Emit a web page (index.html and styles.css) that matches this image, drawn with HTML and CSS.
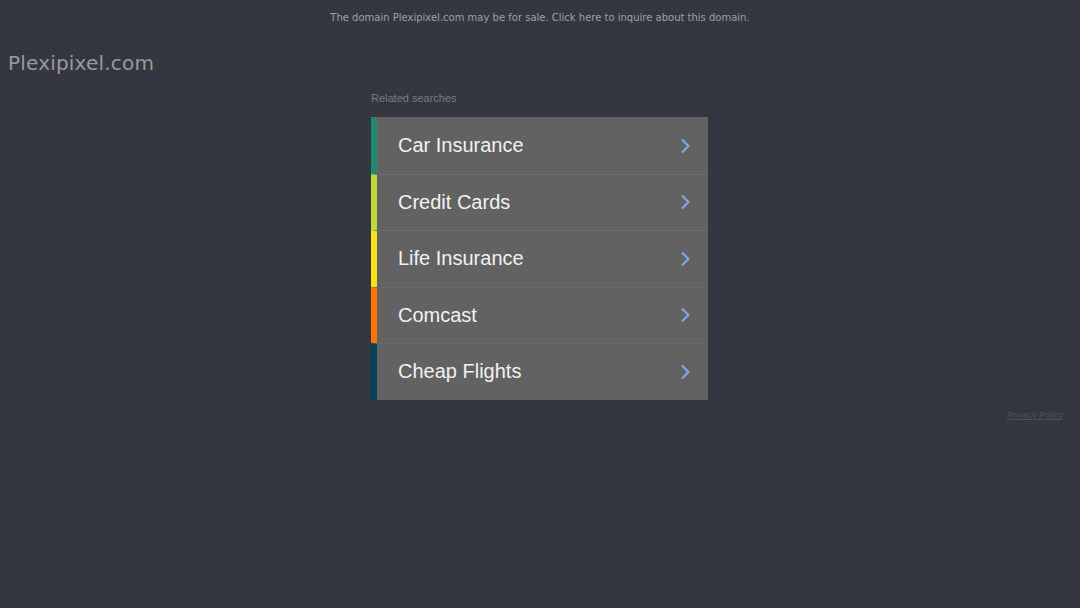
FILE: index.html
```html
<!DOCTYPE html>
<html>
<head>
<meta charset="utf-8">
<link rel="stylesheet" href="styles.css">
</head>
<body>
<div class="topbar">The domain Plexipixel.com may be for sale. Click here to inquire about this domain.</div>
<div class="logo">Plexipixel.com</div>
<div class="main">
  <div class="related">Related searches</div>
  <ul class="list">
    <li class="row c1"><span class="label">Car Insurance</span><svg class="chev" viewBox="0 0 10 16" width="10" height="16"><path d="M2 1.5 L8.5 8 L2 14.5" fill="none" stroke="#7ea6e8" stroke-width="2.2"/></svg></li>
    <li class="row c2"><span class="label">Credit Cards</span><svg class="chev" viewBox="0 0 10 16" width="10" height="16"><path d="M2 1.5 L8.5 8 L2 14.5" fill="none" stroke="#7ea6e8" stroke-width="2.2"/></svg></li>
    <li class="row c3"><span class="label">Life Insurance</span><svg class="chev" viewBox="0 0 10 16" width="10" height="16"><path d="M2 1.5 L8.5 8 L2 14.5" fill="none" stroke="#7ea6e8" stroke-width="2.2"/></svg></li>
    <li class="row c4"><span class="label">Comcast</span><svg class="chev" viewBox="0 0 10 16" width="10" height="16"><path d="M2 1.5 L8.5 8 L2 14.5" fill="none" stroke="#7ea6e8" stroke-width="2.2"/></svg></li>
    <li class="row c5"><span class="label">Cheap Flights</span><svg class="chev" viewBox="0 0 10 16" width="10" height="16"><path d="M2 1.5 L8.5 8 L2 14.5" fill="none" stroke="#7ea6e8" stroke-width="2.2"/></svg></li>
  </ul>
</div>
<div class="footer"><a class="privacy" href="#">Privacy Policy</a></div>
</body>
</html>
```

FILE: styles.css
```css
html, body {
  margin: 0;
  padding: 0;
  background: #353740;
  height: 100%;
}
body {
  font-family: "DejaVu Sans", sans-serif;
}
.topbar {
  text-align: center;
  font-size: 10px;
  color: #9aa0ab;
  padding-top: 12px;
  height: 16px;
}
.logo {
  margin-top: 23px;
  margin-left: 8px;
  font-size: 20px;
  color: #9a9a9a;
  letter-spacing: 0.2px;
  height: 25px;
}
.main {
  width: 338px;
  margin: 0 auto;
  padding-top: 16px;
}
.related {
  font-family: "Liberation Sans", Arial, sans-serif;
  font-size: 11px;
  color: #7a7a7a;
  height: 13px;
  margin-bottom: 12px;
}
.list {
  list-style: none;
  margin: 0 1px 0 0;
  padding: 0;
  background: #626262;
}
.row {
  display: flex;
  align-items: center;
  justify-content: space-between;
  height: 55.5px;
  border-left: 6px solid #1f8a70;
  border-top: 1px solid #6a6a6a;
  padding-left: 21px;
  padding-right: 18px;
}
.row:first-child { border-top-color: #626262; }
.row.c1 { border-left-color: #1f8a70; }
.row.c2 { border-left-color: #bedb39; }
.row.c3 { border-left-color: #ffe11a; }
.row.c4 { border-left-color: #fd7400; }
.row.c5 { border-left-color: #004358; }
.label {
  font-family: "Liberation Sans", Arial, sans-serif;
  font-size: 20px;
  color: #f2f2f2;
}
.footer {
  display: flex;
  justify-content: flex-end;
  padding-right: 17px;
  padding-top: 10px;
}
.privacy {
  font-family: "Liberation Sans", Arial, sans-serif;
  font-size: 9px;
  color: #4e5058;
  text-decoration: underline;
}
```
